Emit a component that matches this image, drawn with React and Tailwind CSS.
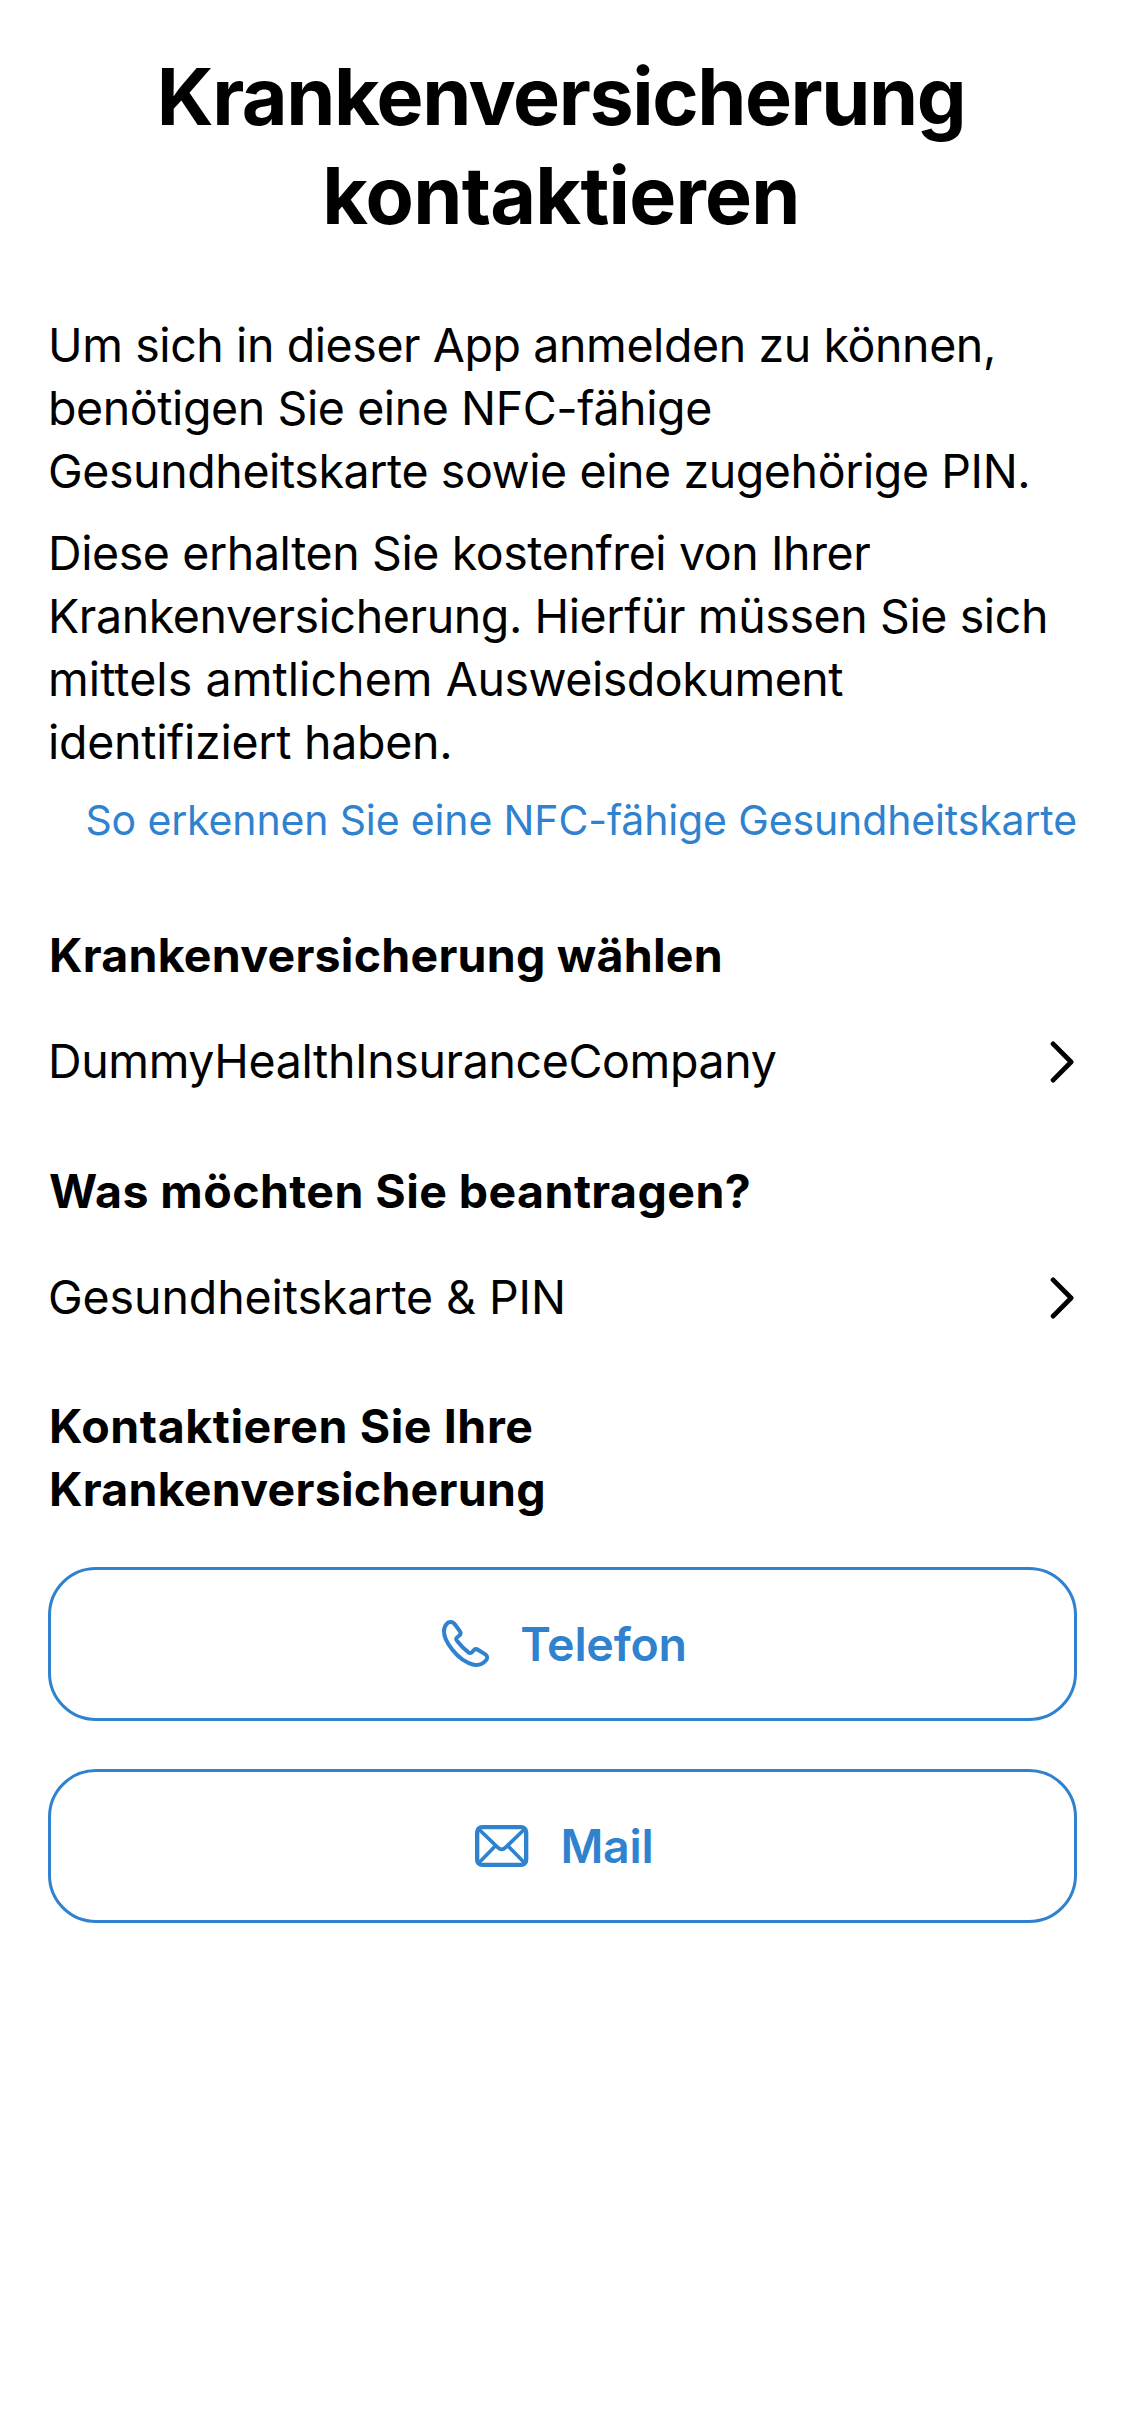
const Line = ({ children, className = "" }) => (
  <span className={"block w-max whitespace-nowrap " + className}>{children}</span>
);

const Chevron = () => (
  <svg width="24" height="42" viewBox="0 0 24 42" fill="none" stroke="#000" strokeWidth="4.8" strokeLinecap="round" strokeLinejoin="round">
    <path d="M3.1 2.9 21.1 21 3.1 39.1" />
  </svg>
);

const Phone = () => (
  <svg width="48" height="48" viewBox="0 0 144 144" fill="none" stroke="currentColor" strokeWidth="12" strokeLinejoin="round">
    <path d="M14 12C19 5 30 4 36 10C42 17 48 26 54 34C58 40 54 45 50 48C41 55 40 58 48 66C55 75 68 88 77 95C84 101 87 101 94 92C98 87 103 86 109 90L130 103C137 108 137 115 132 121C123 132 110 137 95 134C72 129 47 110 30 88C14 68 6 49 6 34C6 24 9 17 14 12Z" />
  </svg>
);

const Envelope = () => (
  <svg width="54" height="42" viewBox="0 0 162 126" fill="none" stroke="currentColor" strokeWidth="13" strokeLinejoin="round">
    <rect x="6.5" y="6.5" width="147" height="113" rx="15" />
    <path d="M11 12 68 67C76 75 84 75 92 67L149 12" strokeWidth="11" />
    <path d="M11 114 61 63M149 114 99 63" strokeWidth="11" />
  </svg>
);

const Row = ({ children, className }) => (
  <div className={"flex h-[63px] items-center justify-between pr-[3px] text-[46.5px] leading-[63px] " + className}>
    {children}
    <Chevron />
  </div>
);

const heading = "pl-px text-[46.5px] leading-[63px] font-bold";
const button =
  "flex h-[154px] w-full items-center justify-center rounded-[48px] border-[3px] border-[#3182ce] pl-[4px] text-[46.5px] leading-[63px] font-semibold tracking-[-0.2px] text-[#3182ce]";

export default function App() {
  return (
    <main className="min-h-[2436px] w-[1125px] bg-white px-12 pt-[47px] font-['Inter',sans-serif] text-black">
      <h1 className="flex flex-col items-center pr-[3px] text-[79px] leading-[99px] font-bold">
        <Line className="tracking-[-1.45px]">Krankenversicherung</Line>
        <Line className="tracking-[-0.75px]">kontaktieren</Line>
      </h1>
      <p className="mt-[69px] text-[46.5px] leading-[63px] tracking-[-0.41px]">
        <Line>Um sich in dieser App anmelden zu können,</Line>
        <Line>benötigen Sie eine NFC-fähige</Line>
        <Line>Gesundheitskarte sowie eine zugehörige PIN.</Line>
      </p>
      <p className="mt-[19px] text-[46.5px] leading-[63px] tracking-[-0.4px]">
        <Line>Diese erhalten Sie kostenfrei von Ihrer</Line>
        <Line>Krankenversicherung. Hierfür müssen Sie sich</Line>
        <Line className="tracking-[-0.46px]">
          <span className="tracking-[0.08px]">mittels amtlichem </span>Ausweisdokument
        </Line>
        <Line className="tracking-[-0.28px]">identifiziert haben.</Line>
      </p>
      <a className="mt-[19px] flex justify-end text-[41px] leading-[54px] tracking-[-0.14px] text-[#3182ce]">
        <Line>So erkennen Sie eine NFC-fähige Gesundheitskarte</Line>
      </a>
      <h2 className={"mt-[77px] " + heading}>
        <Line className="tracking-[0.24px]">Krankenversicherung wählen</Line>
      </h2>
      <Row className="mt-[43px]">
        <Line className="tracking-[-0.37px]">DummyHealthInsuranceCompany</Line>
      </Row>
      <h2 className={"mt-[67px] " + heading}>
        <Line className="tracking-[0.43px]">Was möchten Sie beantragen?</Line>
      </h2>
      <Row className="mt-[43px]">
        <Line className="tracking-[-0.1px]">Gesundheitskarte &amp; PIN</Line>
      </Row>
      <h2 className={"mt-[66px] " + heading}>
        <Line className="tracking-[0.58px]">Kontaktieren Sie Ihre</Line>
        <Line className="tracking-[0.25px]">Krankenversicherung</Line>
      </h2>
      <button className={"mt-[46px] gap-[30px] " + button}>
        <Phone />
        <Line>Telefon</Line>
      </button>
      <button className={"mt-[48px] gap-[31px] " + button}>
        <Envelope />
        <Line>Mail</Line>
      </button>
    </main>
  );
}
